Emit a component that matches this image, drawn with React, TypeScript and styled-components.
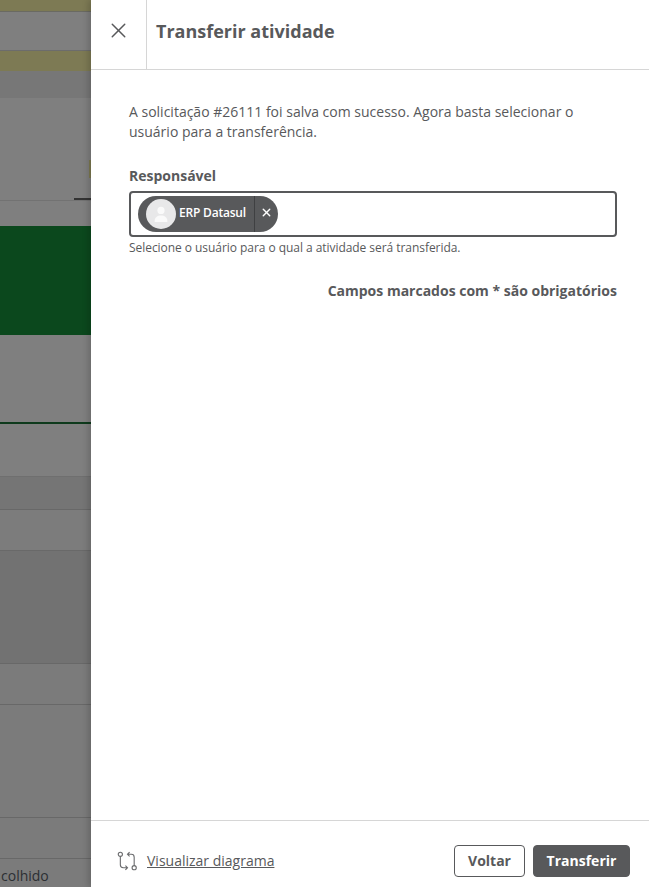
import React from 'react';
import styled, { createGlobalStyle } from 'styled-components';
import { X } from 'lucide-react';

const GlobalStyle = createGlobalStyle`
  html, body {
    margin: 0;
    padding: 0;
    height: 100%;
    overflow: hidden;
    font-family: 'Open Sans', 'Liberation Sans', sans-serif;
  }
`;

const Page = styled.div`
  display: flex;
  width: 649px;
  height: 887px;
  overflow: hidden;
  background: #fff;
`;

const Backdrop = styled.div`
  width: 91px;
  flex-shrink: 0;
  display: flex;
  flex-direction: column;
  background: #7f7f7f;
`;

const BackdropRow = styled.div<{ h: number; bg?: string; line?: string }>`
  box-sizing: border-box;
  height: ${({ h }) => h}px;
  flex-shrink: 0;
  background: ${({ bg }) => bg || '#7f7f7f'};
  border-bottom: 1px solid ${({ line }) => line || 'transparent'};
  display: flex;
  align-items: flex-end;
  justify-content: flex-end;
`;

const TabStrip = styled.div`
  display: flex;
  flex-direction: column;
  align-items: flex-end;
  justify-content: flex-end;
  height: 100%;
`;

const PendingFlag = styled.div`
  width: 2px;
  height: 18px;
  background: #7d7a50;
  margin-bottom: 20px;
`;

const ActiveTab = styled.div`
  width: 17px;
  height: 2px;
  background: #333;
`;

const ColhidoText = styled.div`
  font-size: 14px;
  line-height: 20px;
  color: #2c2f33;
  width: 100%;
  margin-bottom: 2px;
  margin-left: 1px;
`;

const Panel = styled.div`
  flex: 1;
  display: flex;
  flex-direction: column;
  background: #fff;
  box-shadow: -3px 0 6px rgba(0, 0, 0, 0.16);
  color: #58595b;
  position: relative;
`;

const Header = styled.header`
  box-sizing: border-box;
  height: 70px;
  display: flex;
  align-items: stretch;
  border-bottom: 1px solid #d6d6d6;
`;

const CloseCell = styled.div`
  box-sizing: border-box;
  width: 56px;
  display: flex;
  align-items: center;
  justify-content: center;
  padding-bottom: 8px;
  border-right: 1px solid #d6d6d6;
`;

const Title = styled.h1`
  margin: 0 0 0 9px;
  align-self: center;
  padding-bottom: 7px;
  font-size: 18px;
  line-height: 24px;
  font-weight: 700;
  color: #58595b;
`;

const Content = styled.main`
  flex: 1;
  padding: 32px 32px 0 38px;
`;

const Message = styled.p`
  margin: 0;
  font-size: 14px;
  line-height: 20px;
`;

const FieldLabel = styled.div`
  margin-top: 24px;
  font-size: 14px;
  line-height: 20px;
  font-weight: 700;
`;

const FieldBox = styled.div`
  box-sizing: border-box;
  margin-top: 5px;
  height: 46px;
  border: 2px solid #58595b;
  border-radius: 4px;
  padding: 3px 7px;
  display: flex;
  align-items: center;
`;

const Chip = styled.div`
  display: flex;
  align-items: center;
  height: 36px;
  border-radius: 18px;
  background: #58595b;
  color: #fff;
`;

const ChipAvatar = styled.div`
  width: 30px;
  height: 30px;
  margin-left: 8px;
  border-radius: 50%;
  background: #e8e8e9;
  display: flex;
  align-items: center;
  justify-content: center;
`;

const ChipName = styled.span`
  font-size: 12px;
  font-weight: 600;
  line-height: 16px;
  margin-left: 3px;
  padding-right: 8px;
  padding-bottom: 3px;
  letter-spacing: -0.2px;
`;

const ChipRemove = styled.div`
  height: 36px;
  width: 24px;
  padding-bottom: 3px;
  box-sizing: border-box;
  display: flex;
  align-items: center;
  justify-content: center;
  border-left: 1px solid #3f4042;
`;

const Hint = styled.div`
  margin-top: 3px;
  font-size: 12px;
  line-height: 16px;
  letter-spacing: -0.05px;
`;

const RequiredNote = styled.div`
  margin-top: 25px;
  text-align: right;
  font-size: 14px;
  line-height: 20px;
  font-weight: 700;
`;

const Footer = styled.footer`
  box-sizing: border-box;
  height: 67px;
  border-top: 1px solid #d6d6d6;
  display: flex;
  align-items: center;
  padding: 14px 19px 0 26px;
`;

const DiagramLink = styled.a`
  display: flex;
  align-items: center;
  gap: 9px;
  font-size: 14px;
  line-height: 20px;
  color: #58595b;
  text-decoration: none;

  span {
    text-decoration: underline;
  }
`;

const Actions = styled.div`
  margin-left: auto;
  display: flex;
  gap: 8px;
`;

const Button = styled.button<{ primary?: boolean }>`
  box-sizing: border-box;
  height: 32px;
  padding: 0 0 2px;
  width: ${({ primary }) => (primary ? 97 : 71)}px;
  border-radius: 4px;
  border: 1px solid #58595b;
  background: ${({ primary }) => (primary ? '#58595b' : '#fff')};
  color: ${({ primary }) => (primary ? '#fff' : '#58595b')};
  font-family: inherit;
  font-size: 14px;
  font-weight: 700;
`;

const upperRows = [
  { h: 12, bg: '#7d7a54', line: '#6a6a62' },
  { h: 39, line: '#6c6c6c' },
  { h: 20, bg: '#7d7a54' },
  { h: 27, bg: '#777777' },
];

const lowerRows = [
  { h: 25, bg: '#7f7f7f' },
  { h: 109, bg: '#0b481d' },
  { h: 87, bg: '#7f7f7f' },
  { h: 2, bg: '#0e3a1c' },
  { h: 53, line: '#6f6f6f' },
  { h: 33, bg: '#757575', line: '#686868' },
  { h: 41, bg: '#7c7c7c', line: '#696969' },
  { h: 113, bg: '#727272', line: '#686868' },
  { h: 41, bg: '#7b7b7b', line: '#686868' },
  { h: 113, bg: '#7b7b7b', line: '#686868' },
  { h: 41, bg: '#7b7b7b', line: '#686868' },
];

const UserGlyph = () => (
  <svg width="16" height="18" viewBox="0 0 20 22" fill="#fafafa">
    <circle cx="10" cy="6.5" r="4.5" />
    <path d="M2 20c0-4.500 3.500-7 8-7s8 2.500 8 7c0 .8-.6 1-1.200 1H3.200C2.600 21 2 20.800 2 20z" />
  </svg>
);

const DiagramIcon = () => (
  <svg width="21" height="22" viewBox="0 0 22 22" fill="none" stroke="#6a6b6d" strokeWidth="1.150">
    <circle cx="3.500" cy="4" r="2.200" />
    <path d="M3.500 6.200V15c0 2 1 3 3 3h4M8.800 15.800l2.200 2.200-2.200 2.200" />
    <circle cx="18" cy="18" r="2.200" />
    <path d="M18 15.800V7c0-2-1-3-3-3h-4M13.200 1.800 11 4l2.200 2.200" />
  </svg>
);

const App = () => (
  <Page>
    <GlobalStyle />
    <Backdrop>
      {upperRows.map((row, i) => (
        <BackdropRow key={i} {...row} />
      ))}
      <BackdropRow h={103} line="#727272">
        <TabStrip>
          <PendingFlag />
          <ActiveTab />
        </TabStrip>
      </BackdropRow>
      {lowerRows.map((row, i) => (
        <BackdropRow key={i} {...row} />
      ))}
      <BackdropRow h={30} bg="#7b7b7b">
        <ColhidoText>colhido</ColhidoText>
      </BackdropRow>
    </Backdrop>
    <Panel>
      <Header>
        <CloseCell>
          <X size={25} color="#58595b" strokeWidth={1.400} />
        </CloseCell>
        <Title>Transferir atividade</Title>
      </Header>
      <Content>
        <Message>
          A solicitação #26111 foi salva com sucesso. Agora basta selecionar o usuário para a transferência.
        </Message>
        <FieldLabel>Responsável</FieldLabel>
        <FieldBox>
          <Chip>
            <ChipAvatar>
              <UserGlyph />
            </ChipAvatar>
            <ChipName>ERP Datasul</ChipName>
            <ChipRemove>
              <X size={13} color="#fff" strokeWidth={2.500} />
            </ChipRemove>
          </Chip>
        </FieldBox>
        <Hint>Selecione o usuário para o qual a atividade será transferida.</Hint>
        <RequiredNote>Campos marcados com * são obrigatórios</RequiredNote>
      </Content>
      <Footer>
        <DiagramLink>
          <DiagramIcon />
          <span>Visualizar diagrama</span>
        </DiagramLink>
        <Actions>
          <Button>Voltar</Button>
          <Button primary>Transferir</Button>
        </Actions>
      </Footer>
    </Panel>
  </Page>
);

export default App;
